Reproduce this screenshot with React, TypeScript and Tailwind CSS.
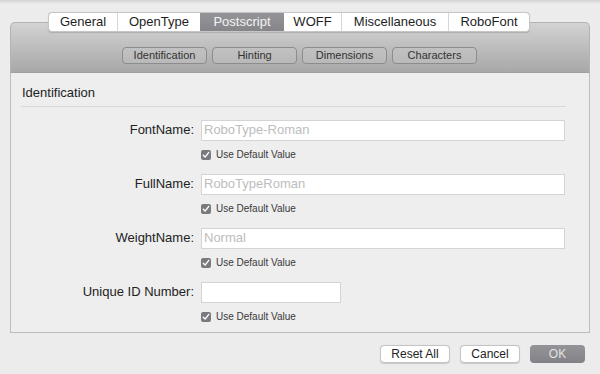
import React from "react"

const tabs = [
  { name: "General", w: "w-[68px]" },
  { name: "OpenType", w: "w-[83px]" },
  { name: "Postscript", w: "w-[84px]", active: true },
  { name: "WOFF", w: "w-[57px]" },
  { name: "Miscellaneous", w: "w-[107px]" },
  { name: "RoboFont", w: "w-[81px]" },
]

const subTabs = ["Identification", "Hinting", "Dimensions", "Characters"]

function Check() {
  return (
    <div className="flex items-center gap-[5px] h-[14px]">
      <div className="w-[10px] h-[10px] rounded-[2px] bg-[#7a7a7e] flex items-center justify-center">
        <svg width="8" height="8" viewBox="0 0 8 8">
          <path d="M1.3 4.2 L3.1 6.1 L6.8 1.4" fill="none" stroke="white" strokeWidth="1.4" strokeLinecap="round" strokeLinejoin="round" />
        </svg>
      </div>
      <span className="text-[10px] text-[#3a3a3a] leading-none">Use Default Value</span>
    </div>
  )
}

function Field({ label, value, short }: { label: string; value: string; short?: boolean }) {
  return (
    <div className="flex flex-col">
      <div className="flex items-center h-[21px]">
        <div className="w-[181px] pr-[7px] text-right text-[13px] text-[#222]">{label}</div>
        <div
          className={`h-[21px] ${short ? "w-[140px]" : "w-[364px]"} bg-white border border-[#d4d4d4] px-[2px] flex items-center text-[13px] text-[#bdbdbd]`}
        >
          {value}
        </div>
      </div>
      <div className="pl-[181px] mt-[7px]">
        <Check />
      </div>
    </div>
  )
}

export default function App() {
  return (
    <div
      className="w-[600px] h-[374px] bg-[#ececec] overflow-hidden flex flex-col"
      style={{ fontFamily: '"Liberation Sans", Helvetica, Arial, sans-serif' }}
    >
      <div className="h-[4px] bg-gradient-to-b from-[#d3d3d3] to-[#ececec]" />

      <div className="mx-[10px] mt-[18px] w-[580px]">
        {/* header */}
        <div className="h-[50px] rounded-t-[5px] border border-b-0 border-[#b3b3b3] bg-gradient-to-b from-[#d3d3d3] to-[#a8a8a8]">
          <div className="-mt-[11px] ml-[37px] flex w-fit h-[20px] bg-white rounded-[4px] border border-[#c6c6c6] shadow-[0_0.5px_1px_rgba(0,0,0,0.15)] overflow-hidden">
            {tabs.map((t, i) => (
              <div
                key={t.name}
                className={`${t.w} flex items-center justify-center text-[13px] ${
                  t.active
                    ? "bg-gradient-to-b from-[#949498] to-[#86868a] text-[#f4f4f4]"
                    : "text-[#1e1e1e]"
                } ${i > 0 && !t.active && !tabs[i - 1].active ? "border-l border-[#d6d6d6]" : ""}`}
              >
                {t.name}
              </div>
            ))}
          </div>
          <div className="mt-[15px] ml-[111px] flex gap-[5px]">
            {subTabs.map((s) => (
              <div
                key={s}
                className="w-[85px] h-[17px] rounded-[4px] border border-[#8c8c8c] bg-[#c8c8c8]/40 flex items-center justify-center text-[11px] text-[#333]"
              >
                {s}
              </div>
            ))}
          </div>
        </div>

        {/* body */}
        <div className="h-[261px] border border-t border-[#bdbdbd] border-t-[#a0a0a0] bg-[#eeeeee] px-[10px]">
          <div className="pt-[10px] pb-[3px] text-[13px] text-[#222] border-b border-[#d8d8d8] w-[545px] pl-[1px]">
            Identification
          </div>
          <div className="mt-[13px] flex flex-col gap-[12px] -ml-[1px]">
            <Field label="FontName:" value="RoboType-Roman" />
            <Field label="FullName:" value="RoboTypeRoman" />
            <Field label="WeightName:" value="Normal" />
            <Field label="Unique ID Number:" value="" short />
          </div>
        </div>
      </div>

      {/* footer buttons */}
      <div className="mt-[12px] ml-[380px] flex gap-[10px]">
        <div className="w-[70px] h-[18px] rounded-[4px] bg-white border border-[#c4c4c4] shadow-[0_0.5px_1px_rgba(0,0,0,0.15)] flex items-center justify-center text-[12px] text-[#222]">
          Reset All
        </div>
        <div className="w-[60px] h-[18px] rounded-[4px] bg-white border border-[#c4c4c4] shadow-[0_0.5px_1px_rgba(0,0,0,0.15)] flex items-center justify-center text-[12px] text-[#222]">
          Cancel
        </div>
        <div className="w-[55px] h-[18px] rounded-[4px] bg-gradient-to-b from-[#949498] to-[#838387] flex items-center justify-center text-[12px] text-[#e2e2e2]">
          OK
        </div>
      </div>
    </div>
  )
}
